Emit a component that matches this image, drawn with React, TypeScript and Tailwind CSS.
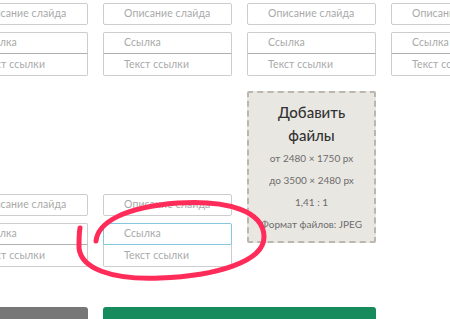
import React from 'react';

const font = { fontFamily: 'Lato, "Open Sans", sans-serif' };

// Placeholder-only input as seen on the slide editor
const Field = ({ label, focused, className = '' }: { label: string; focused?: boolean; className?: string }) => (
  <div
    className={`h-[22px] flex items-center pl-[20px] text-[10.5px] tracking-[0.1px] text-[#a9a9a9] bg-white rounded-[2px] border whitespace-nowrap ${
      focused ? 'border-[#86c7dd]' : 'border-[#cdcdcd]'
    } ${className}`}
  >
    {label}
  </div>
);

const LinkGroup = ({ focused }: { focused?: boolean }) => (
  <div className="flex flex-col">
    <Field label="Ссылка" focused={focused} className={focused ? 'rounded-b-none' : 'rounded-b-none border-b-[#b0b0b0]'} />
    <Field label="Текст ссылки" className="rounded-t-none border-t-0 h-[21px]" />
  </div>
);

const SlideInputs = ({ focused }: { focused?: boolean }) => (
  <div className="flex flex-col gap-[7px]">
    <Field label="Описание слайда" />
    <LinkGroup focused={focused} />
  </div>
);

const UploadBox = () => (
  <div className="h-[152px] bg-[#e9e7e2] border-2 border-dashed border-[#bcb7ad] rounded-[2px] flex flex-col items-center pt-[8px]">
    <div className="text-[15px] font-medium text-[#333] leading-[23px] text-center">
      Добавить
      <br />
      файлы
    </div>
    <div className="mt-[0px] flex flex-col items-center text-[10px] text-[#6c6c6c] leading-[22px]">
      <span>от 2480 × 1750 px</span>
      <span>до 3500 × 2480 px</span>
      <span>1,41 : 1</span>
      <span>Формат файлов: JPEG</span>
    </div>
  </div>
);

export default function App() {
  return (
    <div className="relative w-[450px] h-[319px] overflow-hidden bg-white" style={font}>
      <div className="ml-[-41px] pt-[3px] flex flex-col">
        {/* first row of slides */}
        <div className="grid grid-cols-[129px_129px_129px_129px] gap-x-[15px]">
          <SlideInputs />
          <SlideInputs />
          <SlideInputs />
          <SlideInputs />
        </div>

        {/* second row of slides */}
        <div className="grid grid-cols-[129px_129px_129px_129px] gap-x-[15px] mt-[15px]">
          <div className="pt-[103px]">
            <SlideInputs />
          </div>
          <div className="pt-[103px]">
            <SlideInputs focused />
          </div>
          <UploadBox />
          <div />
        </div>

        {/* buttons */}
        <div className="grid grid-cols-[129px_129px_129px_129px] gap-x-[15px] mt-[40px]">
          <div className="h-[20px] bg-[#777777] rounded-t-[3px]" />
          <div className="col-span-2 h-[20px] bg-[#178b5b] rounded-t-[3px]" />
        </div>
      </div>

      {/* hand-drawn annotation */}
      <svg className="absolute inset-0 pointer-events-none" width="450" height="319" viewBox="0 0 450 319">
        <path
          d="M 96 241 C 98 222, 125 207, 178 203 C 228 200, 264 211, 264 237 C 264 262, 215 276, 160 278 C 110 280, 81 268, 79 248 C 79 240, 79 233, 80 228"
          fill="none"
          stroke="#ff2c5a"
          strokeWidth="5"
          strokeLinecap="round"
        />
      </svg>
    </div>
  );
}
